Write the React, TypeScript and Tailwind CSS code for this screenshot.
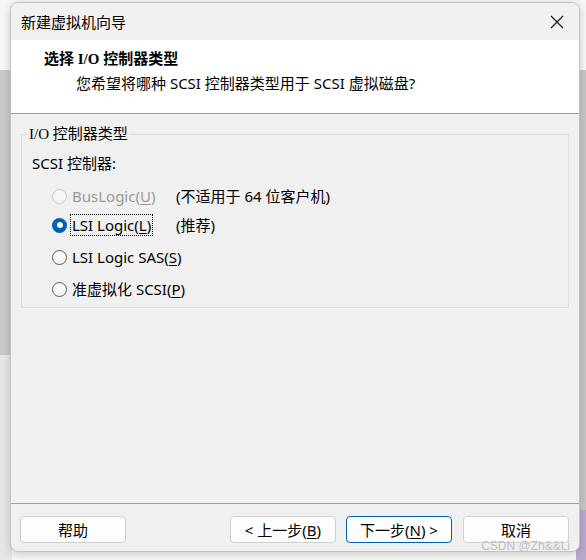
import React from 'react';

const ui = { fontFamily: '"Noto Sans", "Noto Sans CJK SC", sans-serif' };
const serif = { fontFamily: '"Liberation Serif", "Noto Sans CJK SC", serif' };

type Option = {
  label: React.ReactNode;
  note?: string;
  checked?: boolean;
  disabled?: boolean;
  focused?: boolean;
};

function Radio({ checked, disabled }: { checked?: boolean; disabled?: boolean }) {
  if (checked) {
    return (
      <span className="flex h-[15px] w-[15px] shrink-0 items-center justify-center rounded-full bg-[#005fb8]">
        <span className="h-[6px] w-[6px] rounded-full bg-white" />
      </span>
    );
  }
  return (
    <span
      className={`h-[15px] w-[15px] shrink-0 rounded-full border ${
        disabled ? 'border-[#c6c6c6] bg-[#f5f5f5]' : 'border-[#5a5a5a] bg-[#f8f8f8]'
      }`}
    />
  );
}

const options: Option[] = [
  {
    label: (
      <>
        BusLogic(<span className="underline underline-offset-2">U</span>)
      </>
    ),
    note: '(不适用于 64 位客户机)',
    disabled: true,
  },
  {
    label: (
      <>
        LSI Logic(<span className="underline underline-offset-2">L</span>)
      </>
    ),
    note: '(推荐)',
    checked: true,
    focused: true,
  },
  {
    label: (
      <>
        LSI Logic SAS(<span className="underline underline-offset-2">S</span>)
      </>
    ),
  },
  {
    label: (
      <>
        准虚拟化 SCSI(<span className="underline underline-offset-2">P</span>)
      </>
    ),
  },
];

const rowGaps = ['mt-[13px]', 'mt-[9px]', 'mt-[12px]', 'mt-[12px]'];

function Button({ children, primary }: { children: React.ReactNode; primary?: boolean }) {
  return (
    <button
      className={`flex h-[27px] w-[106px] items-center justify-center rounded-[4px] bg-[#fdfdfd] text-[15px] leading-[20px] text-black ${
        primary ? 'border border-[#005fb8]' : 'border border-[#d0d0d0]'
      }`}
    >
      {children}
    </button>
  );
}

export default function App() {
  return (
    <div className="relative h-[560px] w-[586px] overflow-hidden bg-[#f6f6f6]" style={ui}>
      {/* desktop behind the dialog */}
      <div className="absolute left-0 top-[70px] h-[285px] w-[12px] bg-[#c9c9c9]" />
      <div className="absolute left-0 top-[355px] h-[205px] w-[12px] bg-[#e6e6e6]" />
      <div className="absolute right-0 top-[70px] h-[440px] w-[10px] bg-[#c6c6c6]" />
      <div className="absolute bottom-0 right-0 h-[50px] w-[10px] bg-[#b9a9cf]" />

      <div className="relative pl-[10px] pt-[2px]">
        <div className="flex h-[550px] w-[570px] flex-col overflow-hidden rounded-[8px] border border-[#c2c2c2] bg-[#f0f0f0] shadow-[0_2px_8px_rgba(0,0,0,0.18)]">
          {/* Title bar */}
          <div className="flex h-[37px] shrink-0 items-center justify-between bg-[#f2f1ef] pl-[10px] pr-[15px]">
            <span className="text-[15px] leading-[20px] text-black">新建虚拟机向导</span>
            <svg width="14" height="14" viewBox="0 0 14 14">
              <path d="M1 1L13 13M13 1L1 13" stroke="#1a1a1a" strokeWidth="1.2" />
            </svg>
          </div>

          {/* Header */}
          <div className="h-[74px] shrink-0 border-b border-[#a0a0a0] bg-white pt-[9px]">
            <div className="pl-[33px] text-[15px] font-bold leading-[20px] text-black" style={serif}>
              选择 I/O 控制器类型
            </div>
            <div className="mt-[4px] pl-[65px] text-[15px] leading-[20px] text-black">
              您希望将哪种 SCSI 控制器类型用于 SCSI 虚拟磁盘?
            </div>
          </div>

          {/* Body */}
          <div className="flex-1 px-[10px] pt-[10px]">
            <fieldset className="border border-[#dcdcdc] pb-[8px]">
              <legend className="ml-[6px] px-[1px] text-[15px] leading-[20px] text-black" style={serif}>
                I/O 控制器类型
              </legend>
              <div className="pl-[10px]">
                <div className="mt-[9px] text-[15px] leading-[20px] text-black">SCSI 控制器:</div>
                {options.map((o, i) => (
                  <div key={i} className={`flex h-[20px] items-center pl-[20px] ${rowGaps[i]}`}>
                    <Radio checked={o.checked} disabled={o.disabled} />
                    <div className="ml-[4px] w-[105px] shrink-0 whitespace-nowrap">
                      <span
                        className={`px-[1px] text-[15px] leading-[19px] ${
                          o.disabled ? 'text-[#9b9b9b]' : 'text-black'
                        } ${o.focused ? 'outline outline-1 outline-dotted outline-black' : ''}`}
                      >
                        {o.label}
                      </span>
                    </div>
                    {o.note && (
                      <span className="whitespace-nowrap text-[15px] leading-[20px] text-black">{o.note}</span>
                    )}
                  </div>
                ))}
              </div>
            </fieldset>
          </div>

          {/* Footer */}
          <div className="flex h-[48px] shrink-0 items-start justify-between border-t border-[#a0a0a0] pl-[9px] pr-[10px] pt-[12px]">
            <Button>帮助</Button>
            <div className="flex gap-[10px]">
              <Button>
                &lt; 上一步(<span className="underline underline-offset-2">B</span>)
              </Button>
              <Button primary>
                下一步(<span className="underline underline-offset-2">N</span>) &gt;
              </Button>
              <div className="ml-[1px]">
                <Button>取消</Button>
              </div>
            </div>
          </div>
        </div>
      </div>

      <span
        className="absolute bottom-[7px] right-[16px] text-[12px] leading-[14px] text-[#bdbdbd]"
        style={{ fontFamily: '"Liberation Sans", sans-serif' }}
      >
        CSDN @Zh&amp;&amp;Li
      </span>
    </div>
  );
}
